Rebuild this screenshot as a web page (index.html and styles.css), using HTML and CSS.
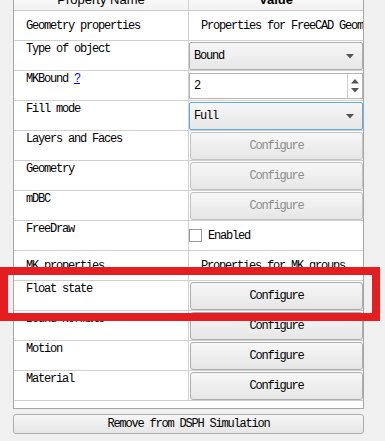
FILE: index.html
```html
<!DOCTYPE html>
<html lang="en">
<head>
  <meta charset="UTF-8">
  <title>Object Properties</title>
  <link rel="stylesheet" href="styles.css">
</head>
<body>

  <div class="panel">
    <!-- Property table -->
    <div class="table">
      <div class="head">
        <div class="hcell">Property Name</div>
        <div class="hcell bold">Value</div>
      </div>

      <div class="row group">
        <div class="key">Geometry properties</div>
        <div class="val"><span class="note">Properties for FreeCAD Geometry objects</span></div>
      </div>

      <div class="row">
        <div class="key">Type of object</div>
        <div class="val">
          <div class="combo">
            <span>Bound</span>
            <svg class="arrow" width="8" height="5" viewBox="0 0 8 5"><path d="M0 0h8L4 4.5z" fill="#555"/></svg>
          </div>
        </div>
      </div>

      <div class="row">
        <div class="key">MKBound <a class="help" href="#">?</a></div>
        <div class="val">
          <div class="spin">
            <span class="spin-text">2</span>
            <div class="spin-btns">
              <svg width="8" height="5" viewBox="0 0 8 5"><path d="M0 4.5h8L4 0z" fill="#555"/></svg>
              <svg width="8" height="5" viewBox="0 0 8 5"><path d="M0 0h8L4 4.5z" fill="#555"/></svg>
            </div>
          </div>
        </div>
      </div>

      <div class="row">
        <div class="key">Fill mode</div>
        <div class="val">
          <div class="combo focus">
            <span>Full</span>
            <svg class="arrow" width="8" height="5" viewBox="0 0 8 5"><path d="M0 0h8L4 4.5z" fill="#555"/></svg>
          </div>
        </div>
      </div>

      <div class="row">
        <div class="key">Layers and Faces</div>
        <div class="val"><button class="cfg" disabled>Configure</button></div>
      </div>

      <div class="row">
        <div class="key">Geometry</div>
        <div class="val"><button class="cfg" disabled>Configure</button></div>
      </div>

      <div class="row">
        <div class="key">mDBC</div>
        <div class="val"><button class="cfg" disabled>Configure</button></div>
      </div>

      <div class="row">
        <div class="key">FreeDraw</div>
        <div class="val check-cell">
          <span class="checkbox"></span>
          <span>Enabled</span>
        </div>
      </div>

      <div class="row group">
        <div class="key">MK properties</div>
        <div class="val"><span class="note">Properties for MK groups</span></div>
      </div>

      <div class="row">
        <div class="key">Float state</div>
        <div class="val"><button class="cfg">Configure</button></div>
      </div>

      <div class="row">
        <div class="key">Bound Normals</div>
        <div class="val"><button class="cfg">Configure</button></div>
      </div>

      <div class="row">
        <div class="key">Motion</div>
        <div class="val"><button class="cfg">Configure</button></div>
      </div>

      <div class="row">
        <div class="key">Material</div>
        <div class="val"><button class="cfg">Configure</button></div>
      </div>

      <div class="filler"></div>
    </div>

    <button class="remove">Remove from DSPH Simulation</button>
  </div>

  <!-- Highlight drawn over the screenshot -->
  <div class="mark"></div>

</body>
</html>
```

FILE: styles.css
```css
/* Base page */
body {
  margin: 0;
  background-color: #f0f0f0;
  font-family: 'Liberation Mono', 'Courier New', monospace;
  font-size: 12px;
  letter-spacing: -1.2px;
  color: #000;
  overflow: hidden;
  position: relative;
  height: 441px;
}

.panel {
  padding-left: 13px;
}

/* Property table */
.table {
  width: 351px;
  box-sizing: border-box;
  margin-top: -13px;
  border: 1px solid #a6a6a6;
  background-color: #fff;
}

.head {
  display: flex;
  height: 22px;
  border-bottom: 1px solid #c9c9c9;
  background: linear-gradient(#ffffff, #f2f2f2);
}

.hcell {
  font-family: 'Liberation Sans', Arial, sans-serif;
  font-size: 13px;
  letter-spacing: 0;
  width: 174px;
  display: flex;
  align-items: center;
  justify-content: center;
  color: #000;
}

.hcell:first-child {
  border-right: 1px solid #d0d0d0;
}

.bold {
  font-weight: bold;
}

.row {
  display: flex;
  height: 29px;
  border-bottom: 1px solid #d0d0d0;
}

.key {
  width: 162px;
  padding: 1px 0 0 12px;
  line-height: 14px;
  border-right: 1px solid #d0d0d0;
  white-space: nowrap;
}

.val {
  width: 174px;
  display: flex;
  padding-top: 1px;
  box-sizing: border-box;
  overflow: hidden;
}

/* Group header rows have centered text */
.group .key {
  padding-top: 0;
  display: flex;
  align-items: center;
}

.group .val {
  align-items: center;
  padding: 0 0 0 12px;
}

.note {
  white-space: nowrap;
}

.help {
  color: #0000ff;
}

/* Combo box */
.combo {
  flex: 1;
  display: flex;
  align-items: center;
  justify-content: space-between;
  padding: 0 8px 0 4px;
  border: 1px solid #adadad;
  border-radius: 2px;
  background: linear-gradient(#f6f6f6, #e7e7e7);
}

.combo.focus {
  border-color: #5fa8ea;
}

/* Spin box */
.spin {
  flex: 1;
  display: flex;
  margin-top: 1px;
  margin-bottom: 1px;
  border: 1px solid #b5b5b5;
  background: #fff;
}

.spin-text {
  flex: 1;
  display: flex;
  align-items: center;
  padding-left: 4px;
}

.spin-btns {
  width: 14px;
  border-left: 1px solid #cfcfcf;
  display: flex;
  flex-direction: column;
  justify-content: center;
  align-items: center;
  gap: 4px;
}

.spin-btns svg {
  display: block;
}

/* Buttons */
button {
  font-family: 'Liberation Mono', 'Courier New', monospace;
  font-size: 12px;
  letter-spacing: -1.2px;
}

.cfg {
  flex: 1;
  margin: 0 0 0 1px;
  padding: 0;
  border: 1px solid #adadad;
  border-radius: 3px;
  background: linear-gradient(#f7f7f7, #e6e6e6);
  color: #000;
}

.cfg:disabled {
  color: #8c8c8c;
  border-color: #c2c2c2;
}

/* Checkbox cell */
.check-cell {
  align-items: center;
  gap: 6px;
  padding-top: 0;
}

.checkbox {
  width: 11px;
  height: 11px;
  border: 1px solid #9a9a9a;
  background: #fff;
  margin-top: -1px;
}

.filler {
  height: 7px;
}

.remove {
  display: block;
  width: 351px;
  height: 20px;
  margin-top: 5px;
  padding: 0;
  border: 1px solid #adadad;
  border-radius: 3px;
  background: linear-gradient(#f6f6f6, #e6e6e6);
  color: #000;
}

/* Red highlight box */
.mark {
  position: absolute;
  left: 0;
  top: 267px;
  width: 380px;
  height: 54px;
  box-sizing: border-box;
  border: 8px solid #e41e20;
}
```
